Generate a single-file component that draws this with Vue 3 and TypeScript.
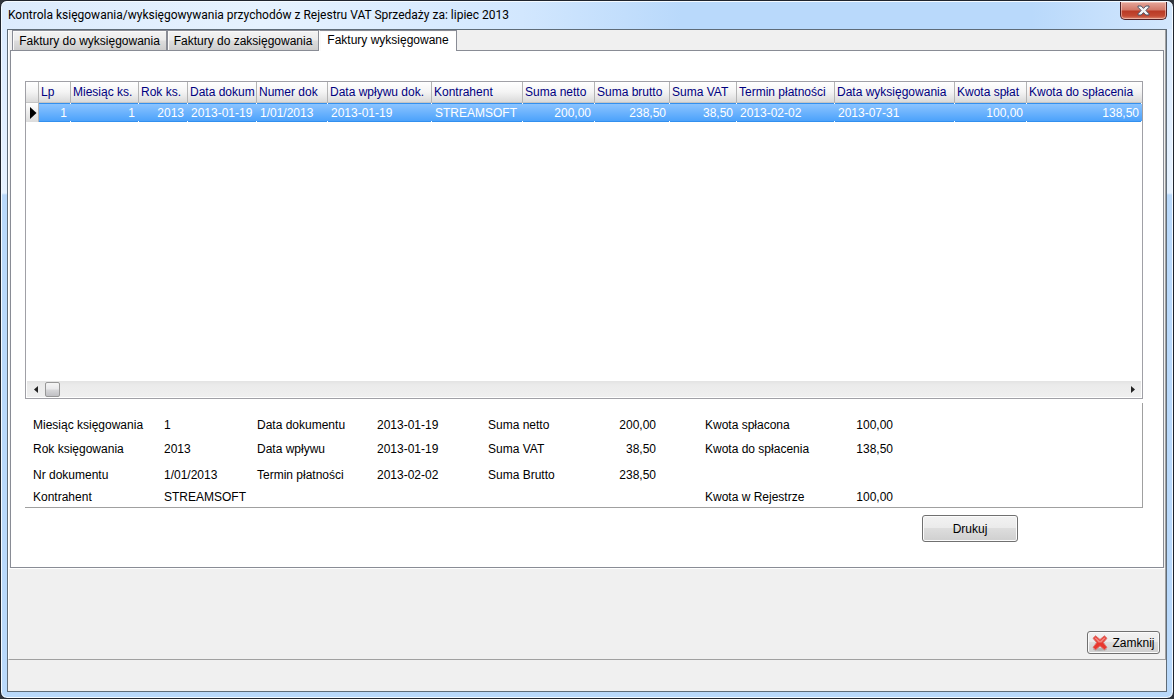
<script setup lang="ts">
import { ref } from 'vue'

interface Column {
  title: string
  value: string
  cls: string
  numeric?: boolean
}

interface Field {
  label: string
  value: string
}

const tabs = ['Faktury do wyksięgowania', 'Faktury do zaksięgowania', 'Faktury wyksięgowane']
const active = ref(2)

const columns: Column[] = [
  { title: 'Lp', value: '1', cls: 'c-lp', numeric: true },
  { title: 'Miesiąc ks.', value: '1', cls: 'c-month', numeric: true },
  { title: 'Rok ks.', value: '2013', cls: 'c-year', numeric: true },
  { title: 'Data dokum', value: '2013-01-19', cls: 'c-date' },
  { title: 'Numer dok', value: '1/01/2013', cls: 'c-number' },
  { title: 'Data wpływu dok.', value: '2013-01-19', cls: 'c-received' },
  { title: 'Kontrahent', value: 'STREAMSOFT', cls: 'c-partner' },
  { title: 'Suma netto', value: '200,00', cls: 'c-net', numeric: true },
  { title: 'Suma brutto', value: '238,50', cls: 'c-gross', numeric: true },
  { title: 'Suma VAT', value: '38,50', cls: 'c-vat', numeric: true },
  { title: 'Termin płatności', value: '2013-02-02', cls: 'c-due' },
  { title: 'Data wyksięgowania', value: '2013-07-31', cls: 'c-posted' },
  { title: 'Kwota spłat', value: '100,00', cls: 'c-paid', numeric: true },
  { title: 'Kwota do spłacenia', value: '138,50', cls: 'c-left', numeric: true },
]

const groups: { cls: string; fields: Field[] }[] = [
  {
    cls: 'g-doc',
    fields: [
      { label: 'Miesiąc księgowania', value: '1' },
      { label: 'Rok księgowania', value: '2013' },
      { label: 'Nr dokumentu', value: '1/01/2013' },
      { label: 'Kontrahent', value: 'STREAMSOFT' },
    ],
  },
  {
    cls: 'g-dates',
    fields: [
      { label: 'Data dokumentu', value: '2013-01-19' },
      { label: 'Data wpływu', value: '2013-01-19' },
      { label: 'Termin płatności', value: '2013-02-02' },
    ],
  },
  {
    cls: 'g-sums',
    fields: [
      { label: 'Suma netto', value: '200,00' },
      { label: 'Suma VAT', value: '38,50' },
      { label: 'Suma Brutto', value: '238,50' },
    ],
  },
  {
    cls: 'g-amounts',
    fields: [
      { label: 'Kwota spłacona', value: '100,00' },
      { label: 'Kwota do spłacenia', value: '138,50' },
      { label: '', value: '' },
      { label: 'Kwota w Rejestrze', value: '100,00' },
    ],
  },
]
</script>

<template>
  <div class="window">
    <header class="titlebar">
      <h1>Kontrola księgowania/wyksięgowywania przychodów z Rejestru VAT Sprzedaży za: lipiec 2013</h1>
      <button class="close" type="button" aria-label="Zamknij okno">
        <svg width="13" height="11" viewBox="0 0 13 11">
          <path
            d="M1 1h3.2l2.3 2.4L8.800 1H12v1.200L8.900 5.500 12 8.800V10H8.800L6.500 7.600 4.200 10H1V8.800l3.100-3.300L1 2.200z"
            fill="#f4f4f4"
            stroke="#4b5468"
            stroke-width="1"
          />
        </svg>
      </button>
    </header>

    <main class="client">
      <div class="body">
        <div class="tabs" role="tablist">
          <button
            v-for="(tab, i) in tabs"
            :key="tab"
            class="tab"
            :class="{ active: i === active }"
            type="button"
            role="tab"
            :aria-selected="i === active"
            @click="active = i"
          >
            {{ tab }}
          </button>
        </div>

        <section class="panel" role="tabpanel">
          <div class="grid">
            <table>
              <colgroup>
                <col class="c-mark" />
                <col v-for="c in columns" :key="c.cls" :class="c.cls" />
              </colgroup>
              <thead>
                <tr>
                  <th></th>
                  <th v-for="c in columns" :key="c.cls" scope="col">{{ c.title }}</th>
                </tr>
              </thead>
              <tbody>
                <tr>
                  <td class="mark">
                    <svg width="7" height="12" viewBox="0 0 7 12"><path d="M0 0l6.500 6L0 12z" fill="#000" /></svg>
                  </td>
                  <td v-for="c in columns" :key="c.cls" :class="{ num: c.numeric }">{{ c.value }}</td>
                </tr>
              </tbody>
            </table>
            <div class="scroll">
              <button type="button" class="arrow" aria-label="W lewo">
                <svg width="4" height="7" viewBox="0 0 4 7"><path d="M4 0v7L0 3.500z" fill="#222" /></svg>
              </button>
              <span class="thumb"></span>
              <button type="button" class="arrow end" aria-label="W prawo">
                <svg width="4" height="7" viewBox="0 0 4 7"><path d="M0 0v7l4-3.500z" fill="#222" /></svg>
              </button>
            </div>
          </div>

          <div class="details">
            <dl v-for="g in groups" :key="g.cls" :class="g.cls">
              <template v-for="(f, i) in g.fields" :key="i">
                <dt>{{ f.label }}</dt>
                <dd>{{ f.value }}</dd>
              </template>
            </dl>
          </div>

          <div class="print-row">
            <button type="button" class="btn print">Drukuj</button>
          </div>
        </section>

        <div class="actions">
          <button type="button" class="btn exit">
            <svg width="16" height="16" viewBox="0 0 16 16">
              <ellipse cx="8" cy="14.500" rx="7" ry="1.500" fill="#999" opacity=".55" />
              <path
                d="M1 3.300L3.600.8 8 4.500 12.400.8 15 3.300 11.300 7.600 15 12.400l-2.600 2.400L8 10.900l-4.400 3.900L1 12.400l3.700-4.800z"
                fill="#e8382f"
                stroke="#dc7772"
                stroke-width="1"
                stroke-linejoin="round"
              />
              <path d="M2.500 3.300l1.200-1L8 6.100l4.300-3.800 1.200 1L9.500 7.400h-3z" fill="#f3827b" />
            </svg>
            <span>Zamknij</span>
          </button>
        </div>
      </div>
      <footer class="status"></footer>
    </main>
  </div>
</template>

<style>
body {
  margin: 0;
  background: #30343c;
}
</style>

<style scoped>
* {
  box-sizing: border-box;
}

.window {
  display: flex;
  flex-direction: column;
  height: 100vh;
  padding: 0 6px 6px;
  border: 1px solid #1f242d;
  border-radius: 7px;
  background: linear-gradient(180deg, #d9eaff 0, #e6f2ff 192px, #b9d9fb 194px, #b9d9fb 100%);
  box-shadow: inset 0 0 0 1px #f4faff;
  color: #000;
  font-family: 'Liberation Sans', Arial, sans-serif;
  font-size: 12px;
  line-height: 16px;
}

button {
  font: inherit;
  color: inherit;
}

.titlebar {
  display: flex;
  justify-content: space-between;
  flex: none;
  height: 28px;
  margin: 0 -5px;
  padding: 0 5px 0 6px;
  border-top: 1px solid #f4faff;
  border-radius: 6px 6px 0 0;
  background: linear-gradient(90deg, #dcebfd 0, #e6f2fe 260px, #d2e7fe 520px, #b9d9fb 680px, #b9d9fb 88%, #d3e7fd 100%);
}

h1 {
  margin: 0;
  font-family: Roboto, 'Open Sans', sans-serif;
  font-size: 12px;
  font-weight: 400;
  line-height: 26px;
  white-space: nowrap;
}

.close {
  display: flex;
  align-items: center;
  justify-content: center;
  width: 47px;
  height: 18px;
  padding: 0;
  border: 1px solid #4d2127;
  border-top: 0;
  border-radius: 0 0 5px 5px;
  background: linear-gradient(180deg, #e5a69a 0, #d27868 8px, #b93a26 9px, #c34a33 14px, #dd8a74 100%);
  box-shadow: inset 0 0 0 1px rgba(255, 225, 215, 0.5);
}

.client {
  display: flex;
  flex-direction: column;
  flex: 1;
  border: 1px solid #5f6c78;
  background: #f0f0f0;
}

.body {
  display: flex;
  flex-direction: column;
  flex: 1;
  border-right: 1px solid #a0a0a0;
  border-bottom: 1px solid #a0a0a0;
  border-left: 1px solid #fff;
}

.tabs {
  display: flex;
  align-items: flex-end;
  height: 20px;
  padding-left: 3px;
}

.tab {
  height: 20px;
  padding: 0;
  border: 1px solid #898c95;
  border-bottom: 0;
  background: linear-gradient(180deg, #f3f3f3 0, #ebebeb 9px, #dddddd 10px, #cdcdcd 100%);
  box-shadow: inset 1px 1px 0 #fafafa;
  line-height: 18px;
  white-space: nowrap;
}

.tab:nth-child(1) {
  width: 155px;
}

.tab:nth-child(2) {
  width: 152px;
}

.tab.active {
  z-index: 1;
  width: 138px;
  height: 21px;
  margin-bottom: -1px;
  padding-bottom: 3px;
  border-left-color: #fff;
  background: #fff;
}

.panel {
  display: flex;
  flex-direction: column;
  flex: 1;
  margin: 0 1px;
  padding: 30px 20px 25px 14px;
  border: 1px solid #898c95;
  background: #fff;
}

.grid {
  display: flex;
  flex-direction: column;
  flex: 1;
  border: 1px solid #a0a0a6;
  background: #fff;
}

table {
  width: 100%;
  border-collapse: separate;
  border-spacing: 0;
  table-layout: fixed;
}

.c-mark { width: 13px; }
.c-lp { width: 32px; }
.c-month { width: 68px; }
.c-year { width: 49px; }
.c-date { width: 69px; }
.c-number { width: 71px; }
.c-received { width: 104px; }
.c-partner { width: 91px; }
.c-net { width: 72px; }
.c-gross { width: 75px; }
.c-vat { width: 67px; }
.c-due { width: 98px; }
.c-posted { width: 120px; }
.c-paid { width: 72px; }

th,
td {
  overflow: hidden;
  white-space: nowrap;
}

th {
  height: 21px;
  padding: 0 0 0 2px;
  border-right: 1px solid #b4b4b4;
  border-bottom: 1px solid #c4c4c4;
  background: linear-gradient(180deg, #fff 0, #f4f4f4 50%, #dadada 100%);
  color: #000080;
  font-weight: 400;
  text-align: left;
}

th:last-child {
  border-right: 0;
}

td {
  height: 19px;
  padding: 0 4px 0 3px;
  background:
    linear-gradient(#fff, #fff) right bottom / 1px 1px no-repeat,
    linear-gradient(#fff, #fff) right top / 1px 1px no-repeat,
    linear-gradient(180deg, #3390ee 0, #3390ee 1px, #8cc4ff 1px, #4ca2fb 18px, #3390ee 18px, #3390ee 100%);
  color: #fff;
}

td:last-child {
  padding-right: 3px;
}

td.mark {
  padding: 0 0 0 4px;
  border-right: 1px solid #b4b4b4;
  background: linear-gradient(180deg, #fff, #dcdcdc);
}

.mark svg {
  display: block;
}

.num {
  text-align: right;
}

.scroll {
  display: flex;
  align-items: center;
  height: 17px;
  margin: auto 1px 0;
  border-bottom: 1px solid #fff;
  background: linear-gradient(180deg, #e3e3e3 0, #ebebeb 4px, #efefef 100%);
}

.arrow {
  display: flex;
  align-items: center;
  justify-content: center;
  width: 17px;
  height: 15px;
  padding: 0;
  border: 0;
  background: none;
}

.arrow.end {
  margin-left: auto;
}

.thumb {
  width: 15px;
  height: 15px;
  margin-left: 1px;
  border: 1px solid #979797;
  border-radius: 2px;
  background: linear-gradient(180deg, #f5f5f5 0, #e9e9eb 6px, #d6d6d8 7px, #c0c0c4 100%);
}

.details {
  display: flex;
  margin-top: 4px;
  padding: 14px 0 2px 8px;
  border-right: 1px solid #a0a0a0;
  border-bottom: 1px solid #a0a0a0;
}

dl {
  display: grid;
  grid-template-rows: 24px 26px 22px 16px;
  margin: 0;
  white-space: nowrap;
}

dd {
  margin: 0;
}

.g-doc {
  grid-template-columns: 131px 93px;
}

.g-dates {
  grid-template-columns: 120px 111px;
}

.g-sums {
  grid-template-columns: 110px 58px;
  margin-right: 49px;
}

.g-amounts {
  grid-template-columns: 130px 58px;
}

.g-sums dd,
.g-amounts dd {
  text-align: right;
}

.print-row {
  display: flex;
  justify-content: flex-end;
  padding: 7px 125px 0 0;
}

.btn {
  display: flex;
  align-items: center;
  justify-content: center;
  border: 1px solid #707070;
  border-radius: 3px;
  background: linear-gradient(180deg, #f2f2f2 0, #ebebeb 48%, #dddddd 50%, #cfcfcf 100%);
  box-shadow: inset 0 0 0 1px #fbfbfb;
}

.print {
  width: 96px;
  height: 27px;
}

.actions {
  display: flex;
  align-items: flex-end;
  justify-content: flex-end;
  height: 91px;
  padding: 0 5px 5px 0;
  border-top: 1px solid #fff;
}

.exit {
  gap: 4px;
  width: 73px;
  height: 23px;
  padding: 0;
}

.status {
  height: 31px;
}
</style>
